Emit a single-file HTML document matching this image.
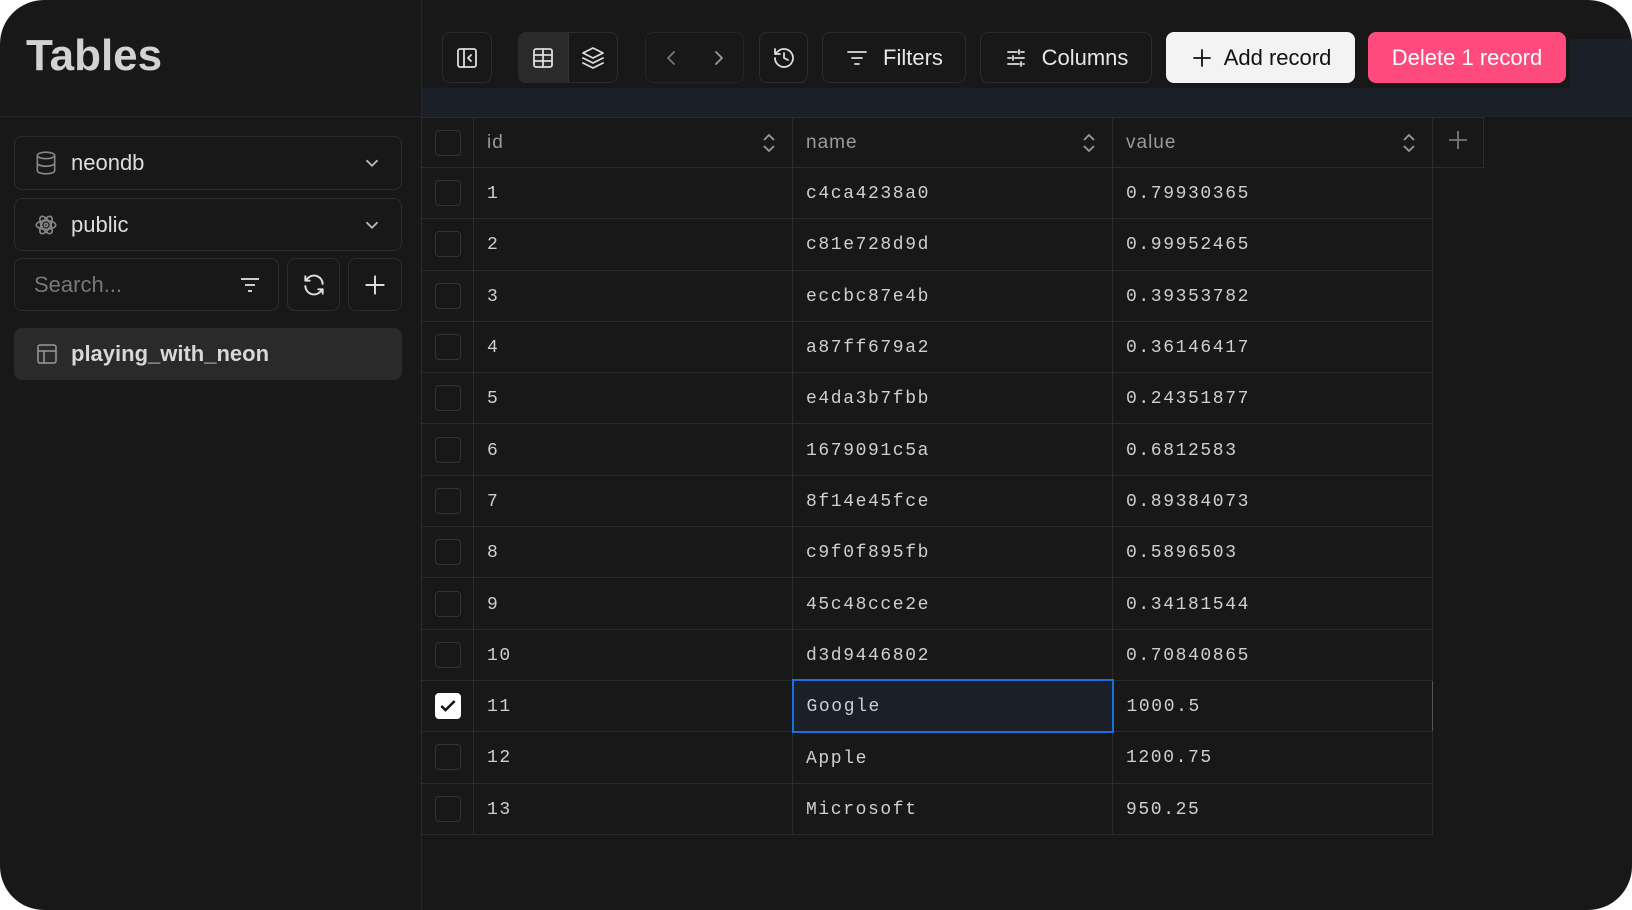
<!DOCTYPE html>
<html><head><meta charset="utf-8"><style>
*{box-sizing:border-box;margin:0;padding:0}
body{width:1632px;height:910px;background:#fff;font-family:"Liberation Sans",sans-serif;overflow:hidden}
#app{position:absolute;left:0;top:0;width:1632px;height:910px;background:#181818;border-radius:44px;overflow:hidden}
.abs{position:absolute}
.btn{position:absolute;border:1px solid #2c2c2c;border-radius:8px;background:#181818;display:flex;align-items:center;justify-content:center;color:#e6e6e6;font-size:22px}
.btn svg{stroke:#ddd;fill:none;stroke-width:1.8;stroke-linecap:round;stroke-linejoin:round}
.sel{position:absolute;left:14px;width:388px;border:1px solid #2c2c2c;border-radius:8px;display:flex;align-items:center;color:#ddd;font-size:22px}
table{position:absolute;left:421px;top:117px;border-collapse:collapse;table-layout:fixed}
td{height:51.3px;border:1px solid #2b2b2b;color:#cfcfcf;font-family:"Liberation Mono",monospace;font-size:18px;letter-spacing:1.6px;padding-left:13px;padding-top:2px}
td.cb{padding:0;width:52px}
.box{width:26px;height:26px;border:1px solid #333;border-radius:4px;margin:0 auto}
th{height:50px;border:1px solid #2b2b2b;color:#9a9a9a;font-weight:normal;font-size:19px;text-align:left;padding-left:13px;letter-spacing:1px;position:relative}
th .s{position:absolute;right:14px;top:13px}
tr.hl td{border-top:1px solid #555}
</style></head><body><div id="app">
<div class="abs" style="left:421px;top:0;width:1px;height:910px;background:#262626"></div>
<div class="abs" style="left:0;top:116px;width:421px;height:1px;background:#262626"></div>
<div class="abs" style="left:26px;top:31px;font-size:44px;font-weight:bold;color:#d2d2d2">Tables</div>
<div class="abs" style="left:422px;top:88px;width:1210px;height:29px;background:#1b1f27"></div>
<div class="abs" style="left:1570px;top:39px;width:62px;height:50px;background:#1b1f27"></div>

<div class="btn" style="left:442px;top:32px;width:50px;height:51px"><svg width="24" height="24" viewBox="0 0 24 24"><rect x="3" y="3" width="18" height="18" rx="2"/><path d="M9 3v18M16 9l-3 3 3 3"/></svg></div>
<div class="btn" style="left:518px;top:32px;width:100px;height:51px;justify-content:flex-start">
<div style="width:50px;height:49px;background:#2a2a2a;border-right:1px solid #333;border-radius:7px 0 0 7px;display:flex;align-items:center;justify-content:center"><svg width="24" height="24" viewBox="0 0 24 24"><rect x="3" y="3" width="18" height="18" rx="2"/><path d="M3 9h18M3 15h18M12 3v18"/></svg></div>
<div style="width:49px;display:flex;justify-content:center"><svg width="24" height="24" viewBox="0 0 24 24"><path d="M12 2 2 7l10 5 10-5z M2 12l10 5 10-5 M2 17l10 5 10-5"/></svg></div></div>
<div class="btn" style="left:645px;top:32px;width:99px;height:51px;border-color:#252525"><svg width="24" height="24" viewBox="0 0 24 24" style="stroke:#777;margin-right:24px"><path d="M15 18l-6-6 6-6"/></svg><svg width="24" height="24" viewBox="0 0 24 24" style="stroke:#999"><path d="M9 18l6-6-6-6"/></svg></div>
<div class="btn" style="left:759px;top:32px;width:49px;height:51px"><svg width="24" height="24" viewBox="0 0 24 24"><path d="M3 12a9 9 0 1 0 3-6.7L3 8M3 3v5h5M12 7v5l4 2"/></svg></div>
<div class="btn" style="left:822px;top:32px;width:144px;height:51px"><svg width="24" height="24" viewBox="0 0 24 24" style="margin-right:14px"><path d="M3 6h18M7 12h10M10 18h4"/></svg>Filters</div>
<div class="btn" style="left:980px;top:32px;width:172px;height:51px"><svg width="24" height="24" viewBox="0 0 24 24" style="margin-right:14px"><path d="M4 6h9M17 6h3M15 4v4M4 12h3M11 12h9M9 10v4M4 18h11M19 18h1M17 16v4"/></svg>Columns</div>
<div class="btn" style="left:1166px;top:32px;width:189px;height:51px;background:#f3f3f3;border-color:#f3f3f3;color:#111"><svg width="24" height="24" viewBox="0 0 24 24" style="stroke:#111;margin-right:10px"><path d="M12 4v16M4 12h16"/></svg>Add record</div>
<div class="btn" style="left:1368px;top:32px;width:198px;height:51px;background:#fe4a7d;border-color:#fe4a7d;color:#fff">Delete 1 record</div>

<div class="sel" style="top:136px;height:54px"><svg width="26" height="26" viewBox="0 0 24 24" style="margin:0 12px 0 18px;fill:none;stroke:#888;stroke-width:1.5"><ellipse cx="12" cy="5" rx="8" ry="3"/><path d="M4 5v14c0 1.7 3.6 3 8 3s8-1.3 8-3V5M4 12c0 1.7 3.6 3 8 3s8-1.3 8-3"/></svg>neondb<svg width="22" height="22" viewBox="0 0 24 24" style="margin-left:auto;margin-right:18px;fill:none;stroke:#bbb;stroke-width:2"><path d="M6 9l6 6 6-6"/></svg></div>
<div class="sel" style="top:198px;height:53px"><svg width="26" height="26" viewBox="0 0 24 24" style="margin:0 12px 0 18px;fill:none;stroke:#888;stroke-width:1.5"><circle cx="12" cy="12" r="1.5"/><ellipse cx="12" cy="12" rx="9" ry="4"/><ellipse cx="12" cy="12" rx="9" ry="4" transform="rotate(60 12 12)"/><ellipse cx="12" cy="12" rx="9" ry="4" transform="rotate(120 12 12)"/></svg>public<svg width="22" height="22" viewBox="0 0 24 24" style="margin-left:auto;margin-right:18px;fill:none;stroke:#bbb;stroke-width:2"><path d="M6 9l6 6 6-6"/></svg></div>
<div class="sel" style="top:258px;height:53px;width:265px;color:#777;padding-left:19px">Search...<svg width="24" height="24" viewBox="0 0 24 24" style="margin-left:auto;margin-right:16px;fill:none;stroke:#ccc;stroke-width:2"><path d="M3 6h18M7 12h10M10 18h4"/></svg></div>
<div class="btn" style="left:287px;top:258px;width:53px;height:53px"><svg width="26" height="26" viewBox="0 0 24 24"><path d="M20 11a8 8 0 0 0-14-5l-2 2M4 4v4h4M4 13a8 8 0 0 0 14 5l2-2M20 20v-4h-4"/></svg></div>
<div class="btn" style="left:348px;top:258px;width:54px;height:53px"><svg width="26" height="26" viewBox="0 0 24 24"><path d="M12 4v16M4 12h16"/></svg></div>
<div class="sel" style="top:328px;height:52px;background:#2a2a2a;border-color:#2a2a2a;font-weight:bold;color:#d8d8d8"><svg width="24" height="24" viewBox="0 0 24 24" style="margin:0 12px 0 20px;fill:none;stroke:#999;stroke-width:1.5"><rect x="3" y="3" width="18" height="18" rx="2"/><path d="M3 9h18M9 9v12"/></svg>playing_with_neon</div>

<table>
<colgroup><col style="width:52px"><col style="width:319px"><col style="width:320px"><col style="width:320px"><col style="width:51px"></colgroup>
<tr><td class="cb" style="height:50px"><div class="box"></div></td>
<th>id<svg class="s" width="18" height="24" viewBox="0 0 18 24" fill="none" stroke="#999" stroke-width="1.8"><path d="M4 9l5-5 5 5M4 15l5 5 5-5"/></svg></th>
<th>name<svg class="s" width="18" height="24" viewBox="0 0 18 24" fill="none" stroke="#999" stroke-width="1.8"><path d="M4 9l5-5 5 5M4 15l5 5 5-5"/></svg></th>
<th>value<svg class="s" width="18" height="24" viewBox="0 0 18 24" fill="none" stroke="#999" stroke-width="1.8"><path d="M4 9l5-5 5 5M4 15l5 5 5-5"/></svg></th>
<th style="padding:0;text-align:center"><svg width="24" height="24" viewBox="0 0 24 24" fill="none" stroke="#777" stroke-width="1.8"><path d="M12 3v18M3 12h18"/></svg></th></tr>
<tr><td class="cb"><div class="box"></div></td><td>1</td><td>c4ca4238a0</td><td>0.79930365</td></tr>
<tr><td class="cb"><div class="box"></div></td><td>2</td><td>c81e728d9d</td><td>0.99952465</td></tr>
<tr><td class="cb"><div class="box"></div></td><td>3</td><td>eccbc87e4b</td><td>0.39353782</td></tr>
<tr><td class="cb"><div class="box"></div></td><td>4</td><td>a87ff679a2</td><td>0.36146417</td></tr>
<tr><td class="cb"><div class="box"></div></td><td>5</td><td>e4da3b7fbb</td><td>0.24351877</td></tr>
<tr><td class="cb"><div class="box"></div></td><td>6</td><td>1679091c5a</td><td>0.6812583</td></tr>
<tr><td class="cb"><div class="box"></div></td><td>7</td><td>8f14e45fce</td><td>0.89384073</td></tr>
<tr><td class="cb"><div class="box"></div></td><td>8</td><td>c9f0f895fb</td><td>0.5896503</td></tr>
<tr><td class="cb"><div class="box"></div></td><td>9</td><td>45c48cce2e</td><td>0.34181544</td></tr>
<tr><td class="cb"><div class="box"></div></td><td>10</td><td>d3d9446802</td><td>0.70840865</td></tr>
<tr class="hl"><td class="cb"><div class="box" style="background:#fff;border-color:#fff;display:flex;align-items:center;justify-content:center"><svg width="20" height="20" viewBox="0 0 24 24" fill="none" stroke="#111" stroke-width="3"><path d="M4 12l5 5L20 6"/></svg></div></td><td style="border-left:1px solid #555">11</td><td style="border:2px solid #1a6fe0;background:#1b1f27">Google</td><td style="border-right:1px solid #555">1000.5</td></tr>
<tr><td class="cb"><div class="box"></div></td><td>12</td><td>Apple</td><td>1200.75</td></tr>
<tr><td class="cb"><div class="box"></div></td><td>13</td><td>Microsoft</td><td>950.25</td></tr>
</table>
</div></body></html>
